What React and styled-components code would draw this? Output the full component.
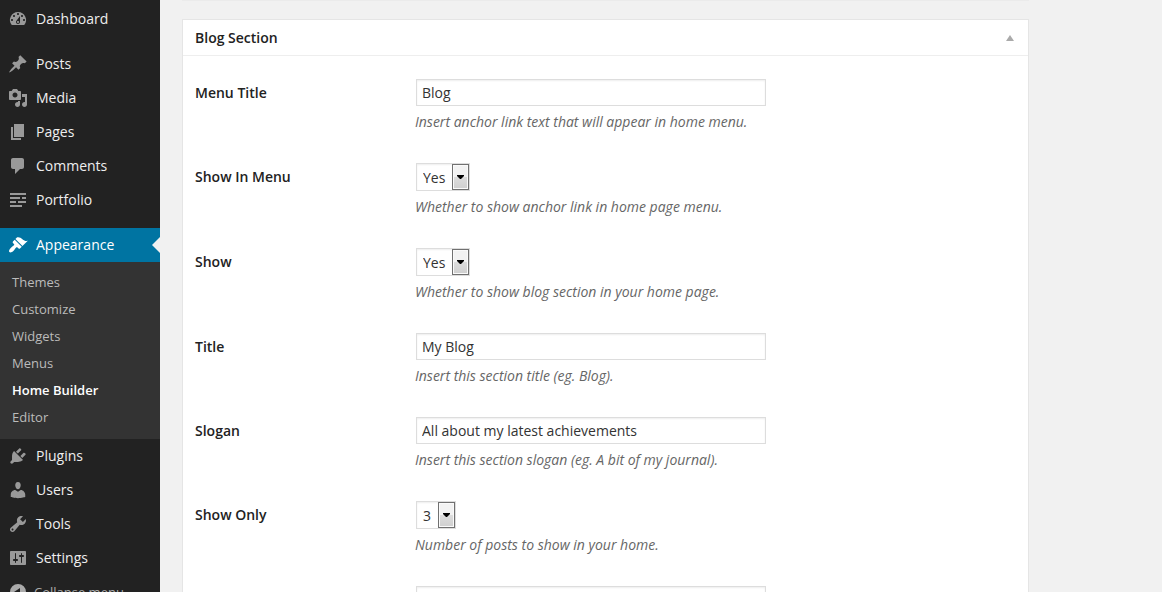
import React, { useState } from "react";
import styled, { createGlobalStyle, css } from "styled-components";

const GlobalStyle = createGlobalStyle`
  *, *::before, *::after { box-sizing: border-box; }
  html, body, #root { height: 100%; }
  body {
    margin: 0;
    overflow: hidden;
    background: #f1f1f1;
    color: #444;
    font: 14px/20px "Open Sans", sans-serif;
  }
`;

const ICONS = {
  dashboard:
    "M3.76 16h12.48A7.998 7.998 0 0 0 10 3a7.998 7.998 0 0 0-6.24 13zM10 4c.55 0 1 .45 1 1s-.45 1-1 1-1-.45-1-1 .45-1 1-1zM6 6c.55 0 1 .45 1 1s-.45 1-1 1-1-.45-1-1 .45-1 1-1zm8 0c.55 0 1 .45 1 1s-.45 1-1 1-1-.45-1-1 .45-1 1-1zm-5.37 5.55L12 7v6c0 1.1-.9 2-2 2s-2-.9-2-2c0-.57.24-1.08.63-1.45zM4 10c.55 0 1 .45 1 1s-.45 1-1 1-1-.45-1-1 .45-1 1-1zm12 0c.55 0 1 .45 1 1s-.45 1-1 1-1-.45-1-1 .45-1 1-1zm-5 3c0-.55-.45-1-1-1s-1 .45-1 1 .45 1 1 1 1-.45 1-1z",
  posts:
    "M10.44 3.02l1.82-1.82 6.36 6.35-1.83 1.82c-1.05-.68-2.48-.57-3.41.36l-.75.75c-.92.93-1.04 2.35-.35 3.41l-1.83 1.82-2.41-2.41-2.8 2.79c-.42.42-3.38 2.71-3.8 2.29s1.86-3.39 2.28-3.81l2.79-2.79L4.1 9.36l1.83-1.82c1.05.69 2.48.57 3.4-.36l.75-.75c.93-.92 1.05-2.35.36-3.41z",
  media:
    "M13 11V4c0-.55-.45-1-1-1h-1.67L9 1H5L3.67 3H2c-.55 0-1 .45-1 1v7c0 .55.45 1 1 1h10c.55 0 1-.45 1-1zM7 4.5c1.38 0 2.5 1.12 2.5 2.5S8.38 9.5 7 9.5 4.5 8.38 4.5 7 5.62 4.5 7 4.5zM14 6h5v10.5c0 1.38-1.12 2.5-2.5 2.5S14 17.88 14 16.5s1.12-2.5 2.5-2.5c.17 0 .34.02.5.05V9h-3V6zm-4 8.05V13h2v3.5c0 1.38-1.12 2.5-2.5 2.5S7 17.88 7 16.5 8.12 14 9.5 14c.17 0 .34.02.5.05z",
  pages: "M6 15V2h10v13H6zm-1 1h8v2H3V5h2v11z",
  comments:
    "M5 2h9c1.1 0 2 .9 2 2v7c0 1.1-.9 2-2 2h-2l-5 5v-5H5c-1.1 0-2-.9-2-2V4c0-1.1.9-2 2-2z",
  portfolio:
    "M18 3v2H2V3h16zm-6 4v2H2V7h10zm6 0v2h-4V7h4zM8 11v2H2v-2h6zm10 0v2h-8v-2h8zm-4 4v2H2v-2h12z",
  appearance:
    "M14.48 11.06L7.41 3.99l1.5-1.5c.5-.56 2.3-.47 3.51.32 1.21.8 1.43 1.28 2.91 2.1 1.18.64 2.45 1.26 4.45.85zm-.71.71L6.7 4.7 4.93 6.47c-.39.39-.39 1.02 0 1.41l1.06 1.06c.39.39.39 1.03 0 1.42-.6.6-1.43 1.11-2.21 1.69-.35.26-.7.53-1.01.84C1.43 14.23.4 16.08 1.4 17.07c.99 1 2.84-.03 4.18-1.36.31-.31.58-.66.85-1.02.57-.78 1.08-1.61 1.69-2.21.39-.39 1.02-.39 1.41 0l1.06 1.06c.39.39 1.02.39 1.41 0z",
  plugins:
    "M13.11 4.36L9.87 7.6 8 5.73l3.24-3.24c.35-.34 1.05-.2 1.56.32.52.51.66 1.21.31 1.55zm-8 1.77l.91-1.12 9.01 9.01-1.19.84c-.71.71-2.63 1.16-3.82 1.16H6.14L4.9 17.26c-.59.59-1.54.59-2.12 0-.59-.58-.59-1.53 0-2.12l1.24-1.24v-3.88c0-1.13.4-3.19 1.09-3.89zm7.26 3.97l3.24-3.24c.34-.35 1.04-.21 1.55.31.52.51.66 1.21.31 1.55l-3.24 3.25z",
  users:
    "M10 9.25c-2.27 0-2.73-3.44-2.73-3.44C7 4.02 7.82 2 9.97 2c2.16 0 2.98 2.02 2.71 3.81 0 0-.41 3.44-2.68 3.44zm0 2.57L12.72 10c2.39 0 4.52 2.33 4.52 4.53v2.49s-3.65 1.13-7.24 1.13c-3.65 0-7.24-1.13-7.24-1.13v-2.49c0-2.25 1.94-4.48 4.47-4.48z",
  tools:
    "M16.68 9.77c-1.34 1.34-3.3 1.67-4.95.99l-5.41 6.52c-.99.99-2.59.99-3.58 0s-.99-2.59 0-3.57l6.52-5.42c-.68-1.65-.35-3.61.99-4.95 1.28-1.28 3.12-1.62 4.72-1.06l-2.89 2.89 2.82 2.82 2.86-2.87c.53 1.58.18 3.39-1.08 4.65zM3.81 16.21c.4.39 1.04.39 1.43 0 .4-.4.4-1.04 0-1.43-.39-.4-1.03-.4-1.43 0-.39.39-.39 1.03 0 1.43z",
  settings:
    "M18 16V4c0-.55-.45-1-1-1H3c-.55 0-1 .45-1 1v12c0 .55.45 1 1 1h14c.55 0 1-.45 1-1zM8 11h1c.55 0 1 .45 1 1s-.45 1-1 1H8v1.5c0 .28-.22.5-.5.5s-.5-.22-.5-.5V13H6c-.55 0-1-.45-1-1s.45-1 1-1h1V5.5c0-.28.22-.5.5-.5s.5.22.5.5V11zm5-2h-1c-.55 0-1-.45-1-1s.45-1 1-1h1V5.5c0-.28.22-.5.5-.5s.5.22.5.5V7h1c.55 0 1 .45 1 1s-.45 1-1 1h-1v5.5c0 .28-.22.5-.5.5s-.5-.22-.5-.5V9z",
  collapse:
    "M10 2a8 8 0 1 0 0 16 8 8 0 0 0 0-16zm2 4v8l-6-4z",
};

const Shell = styled.div`
  display: flex;
  height: 100vh;
  overflow: hidden;
`;

const Sidebar = styled.nav`
  flex: 0 0 160px;
  padding-top: 2px;
  background: #222;
`;

const MenuGroup = styled.ul`
  list-style: none;
  margin: 0 0 ${(p) => (p.$flush ? 0 : 11)}px;
  padding: 0;
`;

const MenuLink = styled.a`
  position: relative;
  display: flex;
  align-items: center;
  gap: 8px;
  height: 34px;
  padding: 0 8px;
  color: #eee;
  text-decoration: none;
  svg { flex: none; fill: #999; }
  ${(p) =>
    p.$current &&
    css`
      background: #0074a2;
      color: #fff;
      svg { fill: #fff; }
      &::after {
        content: "";
        position: absolute;
        right: 0;
        top: 9px;
        border: 8px solid transparent;
        border-left-width: 0;
        border-right-color: #f1f1f1;
      }
    `}
`;

const Submenu = styled.ul`
  list-style: none;
  margin: 0;
  padding: 7px 0 8px;
  background: #333;
`;

const SubmenuLink = styled.a`
  display: block;
  padding: 0 12px;
  font-size: 13px;
  line-height: 27px;
  text-decoration: none;
  color: ${(p) => (p.$current ? "#fff" : "#bbb")};
  font-weight: ${(p) => (p.$current ? 600 : 400)};
`;

const CollapseButton = styled.button`
  display: flex;
  align-items: center;
  gap: 6px;
  width: 100%;
  height: 34px;
  padding: 0 8px;
  border: 0;
  background: none;
  color: #aaa;
  font: 13px/20px "Open Sans", sans-serif;
  svg { fill: #aaa; }
`;

const Content = styled.main`
  flex: 1;
  min-width: 0;
  padding: 0 20px 0 22px;
`;

const PreviousBoxEdge = styled.div`
  max-width: 847px;
  height: 1px;
  margin-bottom: 18px;
  background: #ebebeb;
`;

const Panel = styled.section`
  max-width: 847px;
  background: #fff;
  border: 1px solid #e5e5e5;
`;

const PanelHeader = styled.header`
  display: flex;
  align-items: center;
  justify-content: space-between;
  height: 36px;
  padding: 0 12px;
  border-bottom: 1px solid #eee;
`;

const PanelTitle = styled.h3`
  margin: 0;
  font-size: 14px;
  font-weight: 600;
  color: #222;
`;

const ToggleButton = styled.button`
  display: flex;
  padding: 2px;
  border: 0;
  background: none;
  fill: #aaa;
`;

const FieldList = styled.form`
  display: flex;
  flex-direction: column;
  gap: 31px;
  padding: 23px 12px;
`;

const FieldRow = styled.div`
  display: grid;
  grid-template-columns: 220px minmax(0, 351px);
`;

const FieldLabel = styled.label`
  line-height: 27px;
  font-weight: 600;
  color: #222;
`;

const FieldControl = styled.div`
  padding-left: 1px;
`;

const controlStyle = css`
  display: block;
  border: 1px solid #ddd;
  border-radius: 0;
  background: #fff;
  box-shadow: inset 0 1px 2px rgba(0, 0, 0, 0.07);
  color: #333;
  font: 14px/20px "Open Sans", sans-serif;
`;

const TextInput = styled.input`
  ${controlStyle}
  width: 100%;
  height: 27px;
  padding: 0 5px;
`;

const SelectBox = styled.div`
  position: relative;
  width: fit-content;
`;

const Select = styled.select`
  ${controlStyle}
  appearance: none;
  height: 28px;
  padding: 2px 23px 0 6px;
`;

const SelectArrow = styled.span`
  position: absolute;
  inset: 1px 1px 1px auto;
  display: grid;
  place-items: center;
  width: 17px;
  border: 1px solid #707070;
  background: linear-gradient(#f2f2f2 50%, #dddddd 50%, #cfcfcf);
  box-shadow: inset 0 0 0 1px #fafafa;
  pointer-events: none;
`;

const Hint = styled.p`
  margin: 6px 0 0;
  font-style: italic;
  color: #666;
`;

const Icon = ({ name }) => (
  <svg width="20" height="20" viewBox="0 0 20 20" aria-hidden="true">
    <path fillRule="evenodd" d={ICONS[name]} />
  </svg>
);

const MenuItem = ({ icon, label, current, children }) => (
  <li>
    <MenuLink href="#" $current={current}>
      <Icon name={icon} />
      {label}
    </MenuLink>
    {children}
  </li>
);

const SUBMENU = ["Themes", "Customize", "Widgets", "Menus", "Home Builder", "Editor"];

const FIELDS = [
  { id: "menu-title", label: "Menu Title", value: "Blog", hint: "Insert anchor link text that will appear in home menu." },
  { id: "show-in-menu", label: "Show In Menu", options: ["Yes", "No"], value: "Yes", hint: "Whether to show anchor link in home page menu." },
  { id: "show", label: "Show", options: ["Yes", "No"], value: "Yes", hint: "Whether to show blog section in your home page." },
  { id: "title", label: "Title", value: "My Blog", hint: "Insert this section title (eg. Blog)." },
  { id: "slogan", label: "Slogan", value: "All about my latest achievements", hint: "Insert this section slogan (eg. A bit of my journal)." },
  { id: "show-only", label: "Show Only", options: ["1", "2", "3", "4"], value: "3", hint: "Number of posts to show in your home." },
];

function Field({ id, label, options, value, hint }) {
  const [current, setCurrent] = useState(value);
  const onChange = (e) => setCurrent(e.target.value);
  return (
    <FieldRow>
      <FieldLabel htmlFor={id}>{label}</FieldLabel>
      <div>
        <FieldControl>
          {options ? (
            <SelectBox>
              <Select id={id} value={current} onChange={onChange}>
                {options.map((o) => (
                  <option key={o}>{o}</option>
                ))}
              </Select>
              <SelectArrow>
                <svg width="7" height="4" viewBox="0 0 7 4" aria-hidden="true">
                  <path d="M0 0h7v1L4 4H3L0 1z" />
                </svg>
              </SelectArrow>
            </SelectBox>
          ) : (
            <TextInput id={id} type="text" value={current} onChange={onChange} />
          )}
        </FieldControl>
        <Hint>{hint}</Hint>
      </div>
    </FieldRow>
  );
}

export default function App() {
  return (
    <>
      <GlobalStyle />
      <Shell>
        <Sidebar>
          <MenuGroup>
            <MenuItem icon="dashboard" label="Dashboard" />
          </MenuGroup>
          <MenuGroup>
            <MenuItem icon="posts" label="Posts" />
            <MenuItem icon="media" label="Media" />
            <MenuItem icon="pages" label="Pages" />
            <MenuItem icon="comments" label="Comments" />
            <MenuItem icon="portfolio" label="Portfolio" />
          </MenuGroup>
          <MenuGroup $flush>
            <MenuItem icon="appearance" label="Appearance" current>
              <Submenu>
                {SUBMENU.map((name) => (
                  <li key={name}>
                    <SubmenuLink href="#" $current={name === "Home Builder"}>
                      {name}
                    </SubmenuLink>
                  </li>
                ))}
              </Submenu>
            </MenuItem>
            <MenuItem icon="plugins" label="Plugins" />
            <MenuItem icon="users" label="Users" />
            <MenuItem icon="tools" label="Tools" />
            <MenuItem icon="settings" label="Settings" />
          </MenuGroup>
          <CollapseButton type="button">
            <Icon name="collapse" />
            Collapse menu
          </CollapseButton>
        </Sidebar>
        <Content>
          <PreviousBoxEdge />
          <Panel>
            <PanelHeader>
              <PanelTitle>Blog Section</PanelTitle>
              <ToggleButton type="button" aria-label="Toggle panel">
                <svg width="8" height="6" viewBox="0 0 8 6" aria-hidden="true">
                  <path d="M4 0l4 6H0z" />
                </svg>
              </ToggleButton>
            </PanelHeader>
            <FieldList>
              {FIELDS.map((field) => (
                <Field key={field.id} {...field} />
              ))}
              <FieldRow>
                <span />
                <FieldControl>
                  <TextInput type="text" aria-label="Button text" />
                </FieldControl>
              </FieldRow>
            </FieldList>
          </Panel>
        </Content>
      </Shell>
    </>
  );
}
